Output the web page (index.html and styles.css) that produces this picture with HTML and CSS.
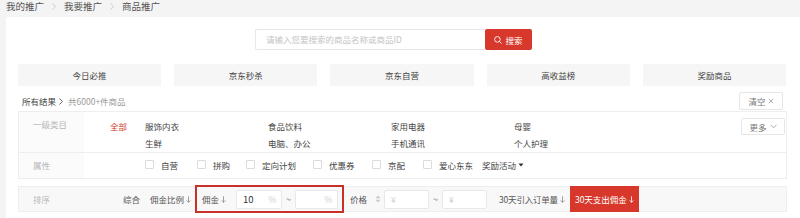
FILE: index.html
```html
<!DOCTYPE html>
<html lang="zh-CN">
<head>
<meta charset="utf-8">
<title>商品推广</title>
<link rel="stylesheet" href="styles.css">
</head>
<body>
<div class="crumbs">
  <span>我的推广</span>
  <svg class="sep" width="4" height="7" viewBox="0 0 4 7"><path d="M0.5 0.5L3.5 3.5L0.5 6.5" fill="none" stroke="#c8c8c8" stroke-width="0.9"/></svg>
  <span>我要推广</span>
  <svg class="sep" width="4" height="7" viewBox="0 0 4 7"><path d="M0.5 0.5L3.5 3.5L0.5 6.5" fill="none" stroke="#c8c8c8" stroke-width="0.9"/></svg>
  <span>商品推广</span>
</div>
<div class="card">
  <div class="search">
    <div class="search-input">请输入您要搜索的商品名称或商品ID</div>
    <div class="search-btn">
      <svg width="8" height="8" viewBox="0 0 8 8"><circle cx="3.4" cy="3.4" r="2.8" fill="none" stroke="#fff" stroke-width="0.9"/><path d="M5.4 5.4L7.5 7.5" stroke="#fff" stroke-width="0.9"/></svg>
      <span>搜索</span>
    </div>
  </div>
  <div class="tabs">
    <div class="tab">今日必推</div>
    <div class="tab">京东秒杀</div>
    <div class="tab">京东自营</div>
    <div class="tab">高收益榜</div>
    <div class="tab">奖励商品</div>
  </div>
  <div class="results">
    <span class="res-title">所有结果</span>
    <svg class="res-arrow" width="4" height="7" viewBox="0 0 4 7"><path d="M0.5 0.5L3.5 3.5L0.5 6.5" fill="none" stroke="#555" stroke-width="0.9"/></svg>
    <span class="res-count">共6000+件商品</span>
    <div class="btn-small clear">清空<svg width="6" height="6" viewBox="0 0 6 6"><path d="M0.8 0.8L5.2 5.2M5.2 0.8L0.8 5.2" stroke="#999" stroke-width="0.8"/></svg></div>
  </div>
  <div class="filter">
    <div class="frow cat">
      <div class="flabel">一级类目</div>
      <div class="fbody cat-body">
        <span class="all">全部</span>
        <div class="cats">
          <span>服饰内衣</span><span>食品饮料</span><span>家用电器</span><span>母婴</span>
          <span>生鲜</span><span>电脑、办公</span><span>手机通讯</span><span>个人护理</span>
        </div>
        <div class="btn-small more">更多<svg width="7" height="5" viewBox="0 0 7 5"><path d="M0.5 0.8L3.5 3.8L6.5 0.8" fill="none" stroke="#999" stroke-width="0.8"/></svg></div>
      </div>
    </div>
    <div class="frow attr">
      <div class="flabel">属性</div>
      <div class="fbody attr-body">
        <label class="chk w52"><span class="box"></span>自营</label>
        <label class="chk w49"><span class="box"></span>拼购</label>
        <label class="chk w67"><span class="box"></span>定向计划</label>
        <label class="chk w59"><span class="box"></span>优惠券</label>
        <label class="chk w51"><span class="box"></span>京配</label>
        <label class="chk w59"><span class="box"></span>爱心东东</label>
        <span class="reward">奖励活动<svg width="6" height="4" viewBox="0 0 6 4"><path d="M0.5 0.5H5.5L3 3.5Z" fill="#333"/></svg></span>
      </div>
    </div>
  </div>
  <div class="sortrow">
    <div class="slabel">排序</div>
    <span class="sitem zonghe">综合</span>
    <span class="sitem ratio">佣金比例<svg class="arr" width="5" height="7" viewBox="0 0 5 7"><path d="M2.5 0.3V6.3M0.6 4.4L2.5 6.3L4.4 4.4" fill="none" stroke="#888" stroke-width="0.8"/></svg></span>
    <div class="hl">
      <span class="sitem">佣金<svg class="arr" width="5" height="7" viewBox="0 0 5 7"><path d="M2.5 0.3V6.3M0.6 4.4L2.5 6.3L4.4 4.4" fill="none" stroke="#888" stroke-width="0.8"/></svg></span>
      <div class="rng first"><span class="val">10</span><span class="unit">%</span></div>
      <span class="tilde">~</span>
      <div class="rng second"><span class="val"></span><span class="unit">%</span></div>
    </div>
    <span class="sitem price">价格</span>
    <svg class="sorticon" width="6" height="8" viewBox="0 0 6 8"><path d="M3 0.5L5.5 3.2H0.5Z M3 7.5L5.5 4.8H0.5Z" fill="#c8c8c8"/></svg>
    <div class="rng yuan"><span class="unit-l">¥</span></div>
    <span class="tilde">~</span>
    <div class="rng yuan"><span class="unit-l">¥</span></div>
    <span class="sitem orders">30天引入订单量<svg class="arr" width="5" height="7" viewBox="0 0 5 7"><path d="M2.5 0.3V6.3M0.6 4.4L2.5 6.3L4.4 4.4" fill="none" stroke="#888" stroke-width="0.8"/></svg></span>
    <div class="active">30天支出佣金<svg class="arr" width="5" height="7" viewBox="0 0 5 7"><path d="M2.5 0.3V6.3M0.6 4.4L2.5 6.3L4.4 4.4" fill="none" stroke="#fff" stroke-width="0.8"/></svg></div>
  </div>
</div>
</body>
</html>
```

FILE: styles.css
```css
* { box-sizing: border-box; }

html, body {
  margin: 0;
  padding: 0;
}

body {
  background: #f4f4f4;
  font-family: "PingFang SC", "Noto Sans CJK SC", "Noto Sans", sans-serif;
  font-size: 8.5px;
  color: #444;
  width: 800px;
  height: 218px;
  overflow: hidden;
}

.crumbs {
  height: 17px;
  padding-left: 6px;
  display: flex;
  align-items: flex-start;
  font-size: 9.5px;
  line-height: 12px;
  color: #555;
}

.crumbs .sep {
  margin: 3px 8px 0 8px;
}

.card {
  margin-left: 6px;
  background: #fff;
  padding: 12px 14px 10px 12px;
  height: 201px;
}

/* search */
.search {
  display: flex;
  padding-left: 237px;
  height: 21px;
}

.search-input {
  width: 230px;
  height: 21px;
  border: 1px solid #e8e8e8;
  border-right: none;
  border-radius: 2px 0 0 2px;
  padding-left: 10px;
  line-height: 19px;
  color: #c4c4c4;
  font-size: 8.5px;
}

.search-btn {
  width: 47px;
  height: 21px;
  background: #d7382b;
  border-radius: 2px;
  color: #fff;
  display: flex;
  align-items: center;
  justify-content: center;
  gap: 3px;
  font-size: 8.5px;
}

/* tabs */
.tabs {
  display: flex;
  gap: 13px;
  margin-top: 14px;
}

.tab {
  flex: 1;
  height: 22px;
  background: #f6f6f6;
  display: flex;
  align-items: center;
  justify-content: center;
  color: #444;
}

/* results line */
.results {
  display: flex;
  align-items: center;
  margin-top: 6px;
  height: 18px;
  padding-left: 4px;
}

.res-title {
  color: #444;
}

.res-arrow {
  margin-left: 3px;
}

.res-count {
  color: #9a9a9a;
  margin-left: 5px;
}

.btn-small {
  border: 1px solid #e6e6e6;
  border-radius: 2px;
  background: #fff;
  color: #777;
  display: flex;
  align-items: center;
  justify-content: center;
  gap: 2px;
}

.clear {
  margin-left: auto;
  margin-right: 3px;
  width: 44px;
  height: 18px;
}

/* filter box */
.filter {
  margin-top: 1px;
  border: 1px solid #eeeeee;
  border-bottom: none;
  width: 769px;
}

.frow {
  display: flex;
  border-bottom: 1px solid #eeeeee;
}

.flabel {
  width: 65px;
  flex: none;
  background: #fbfbfb;
  color: #b8b8b8;
  padding-left: 14px;
}

.fbody {
  flex: 1;
  display: flex;
}

.cat {
  height: 41px;
}

.cat .flabel {
  padding-top: 6px;
  line-height: 12px;
}

.cat-body {
  padding-left: 26px;
  padding-top: 7px;
  line-height: 15px;
}

.all {
  color: #d0392d;
  width: 35px;
  flex: none;
}

.cats {
  display: grid;
  grid-template-columns: repeat(4, 123px);
  color: #444;
}

.more {
  margin-left: auto;
  margin-top: -1px;
  margin-right: 1px;
  width: 44px;
  height: 17px;
  gap: 3px;
  line-height: 12px;
}

.attr {
  height: 26px;
}

.attr .flabel {
  display: flex;
  align-items: center;
  padding-bottom: 2px;
}

.attr-body {
  align-items: center;
  padding-left: 61px;
  padding-bottom: 2px;
}

.chk {
  display: flex;
  align-items: center;
  flex: none;
  color: #444;
}

.w52 { width: 52px; }
.w49 { width: 49px; }
.w67 { width: 67px; }
.w59 { width: 59px; }
.w51 { width: 51px; }

.box {
  width: 9px;
  height: 9px;
  border: 1px solid #dcdcdc;
  border-radius: 1px;
  margin-right: 7px;
  background: #fff;
}

.reward {
  display: flex;
  align-items: center;
  gap: 2px;
  color: #444;
}

/* sort row */
.sortrow {
  margin-top: 7px;
  width: 769px;
  height: 26px;
  border: 1px solid #eeeeee;
  background: #f8f8f8;
  display: flex;
  align-items: center;
  color: #555;
}

.slabel {
  width: 64px;
  flex: none;
  padding-left: 14px;
  color: #b8b8b8;
}

.sitem {
  white-space: nowrap;
  display: flex;
  align-items: center;
}

.arr {
  margin-left: 2px;
}

.zonghe {
  margin-left: 40px;
}

.ratio {
  margin-left: 10px;
}

.hl {
  margin-left: 4px;
  height: 28px;
  border: 2px solid #c8302a;
  display: flex;
  align-items: center;
  padding: 0 4px 0 5px;
  width: 149px;
}

.rng {
  height: 19px;
  background: #fff;
  border: 1px solid #e8e8e8;
  border-radius: 2px;
  display: flex;
  align-items: center;
  justify-content: space-between;
  padding: 0 5px 0 6px;
}

.rng.first {
  width: 46px;
  margin-left: 10px;
}

.rng.second {
  width: 43px;
}

.val {
  color: #333;
  font-size: 9.5px;
}

.unit {
  color: #cfcfcf;
}

.tilde {
  color: #666;
  margin: 0 4px;
  font-size: 9px;
}

.price {
  margin-left: 6px;
}

.sorticon {
  margin-left: 8px;
  margin-right: 3px;
}

.rng.yuan {
  width: 45px;
  justify-content: flex-start;
}

.unit-l {
  color: #cfcfcf;
}

.orders {
  margin-left: 12px;
  color: #555;
  letter-spacing: -0.2px;
}

.active {
  margin-left: 5px;
  height: 26px;
  width: 69px;
  background: #d7382b;
  color: #fff;
  display: flex;
  align-items: center;
  justify-content: center;
  white-space: nowrap;
  margin-top: -1px;
  margin-bottom: -1px;
}
```
